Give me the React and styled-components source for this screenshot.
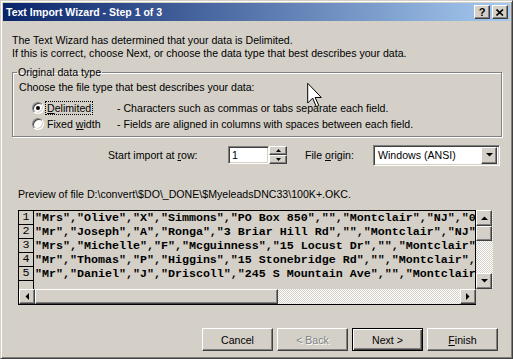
import React from 'react';
import styled, { createGlobalStyle, css } from 'styled-components';

const GlobalStyle = createGlobalStyle`
  html, body {
    margin: 0;
    padding: 0;
    background: #D4D0C8;
  }
  body {
    font-family: "Liberation Sans", Arial, sans-serif;
    font-size: 10.6px;
    color: #000;
  }
  * { box-sizing: border-box; }
`

const raised = css`
  background: #D4D0C8;
  border: 1px solid;
  border-color: #fff #404040 #404040 #fff;
  box-shadow: inset -1px -1px 0 #808080, inset 1px 1px 0 #D4D0C8;
`

const sunken = css`
  border: 1px solid;
  border-color: #808080 #fff #fff #808080;
  box-shadow: inset 1px 1px 0 #404040, inset -1px -1px 0 #D4D0C8;
`

const dither = css`
  background: repeating-conic-gradient(#fff 0 25%, #D4D0C8 0 50%) 0 0 / 2px 2px;
`

const Window = styled.div`
  position: relative;
  width: 513px;
  height: 359px;
  border: 1px solid;
  border-color: #D4D0C8 #404040 #404040 #D4D0C8;
  box-shadow: inset 1px 1px 0 #fff, inset -1px -1px 0 #808080;
  padding: 2px;
  display: flex;
  flex-direction: column;
  overflow: hidden;
`

const TitleBar = styled.div`
  height: 18px;
  display: flex;
  align-items: center;
  padding: 0 2px 0 3px;
  background: linear-gradient(to right, #0A246A, #A6CAF0);
  color: #fff;
  font-weight: bold;
  font-size: 10.5px;
`

const TitleText = styled.div`
  flex: 1;
`

const TitleButton = styled.div`
  ${raised};
  width: 16px;
  height: 14px;
  margin-left: ${p => p.$gap || 0}px;
  display: flex;
  align-items: center;
  justify-content: center;
  color: #000;
  font-size: 11px;
  font-weight: bold;
  line-height: 1;
`

const Body = styled.div`
  padding: 13px 8px 0 9px;
  display: flex;
  flex-direction: column;
`

const Line = styled.div`
  line-height: 13px;
  white-space: nowrap;
`

const U = styled.span`
  text-decoration: underline;
`

const Group = styled.fieldset`
  margin: 6px 0 0;
  padding: 0 0 4px 6px;
  min-width: 0;
  border: 1px solid #808080;
  box-shadow: inset 1px 1px 0 #fff, 1px 1px 0 #fff;
`

const Legend = styled.legend`
  padding: 0 1px;
  margin-left: -2px;
  line-height: 13px;
`

const Prompt = styled.div`
  line-height: 13px;
  margin: 2px 0 6px;
`

const OptionRow = styled.div`
  display: flex;
  align-items: center;
  height: 16px;
  padding-left: 13px;
`

const Radio = styled.span`
  position: relative;
  width: 12px;
  height: 12px;
  border-radius: 50%;
  background: #fff;
  border: 1px solid;
  border-color: #808080 #fff #fff #808080;
  box-shadow: inset 1px 1px 0 #404040, inset -1px -1px 0 #D4D0C8;
  flex: none;
  &::after {
    content: '';
    display: ${p => (p.$checked ? 'block' : 'none')};
    position: absolute;
    left: 3px;
    top: 3px;
    width: 4px;
    height: 4px;
    border-radius: 50%;
    background: #000;
  }
`

const OptionLabel = styled.span`
  width: 72px;
  margin-left: 1px;
  flex: none;
  display: flex;
`

const LabelText = styled.span`
  padding: 0 1px;
  line-height: 12px;
  border: 1px dotted ${p => (p.$focus ? '#000' : 'transparent')};
`

const OptionHint = styled.span`
  white-space: nowrap;
`

const SettingsRow = styled.div`
  display: flex;
  align-items: center;
  height: 22px;
  margin-top: 7px;
  padding-left: 96px;
`

const FieldLabel = styled.span`
  width: ${p => p.$w}px;
  margin-left: ${p => p.$ml || 0}px;
  flex: none;
`

const Spinner = styled.div`
  display: flex;
  width: 59px;
  height: 18px;
`

const SpinInput = styled.div`
  ${sunken};
  background: #fff;
  flex: 1;
  padding: 2px 3px;
  line-height: 12px;
`

const SpinButtons = styled.div`
  width: 18px;
  display: flex;
  flex-direction: column;
`

const SpinButton = styled.div`
  ${raised};
  flex: 1;
  display: flex;
  align-items: center;
  justify-content: center;
`

const Combo = styled.div`
  ${sunken};
  background: #fff;
  width: 127px;
  height: 21px;
  display: flex;
  align-items: center;
  padding: 2px 2px 2px 4px;
`

const ComboText = styled.span`
  flex: 1;
`

const ComboButton = styled.div`
  ${raised};
  width: 16px;
  height: 17px;
  display: flex;
  align-items: center;
  justify-content: center;
`

const PreviewLabel = styled.div`
  line-height: 13px;
  margin: 22px 0 0 6px;
`

const Preview = styled.div`
  margin: 9px 0 0 6px;
  width: 475px;
  display: flex;
  flex-direction: column;
`

const PreviewTop = styled.div`
  display: flex;
  height: 79px;
`

const DataPane = styled.div`
  flex: 1;
  border: 1px solid #000;
  border-bottom: none;
  display: flex;
  overflow: hidden;
`

const NumberColumn = styled.div`
  width: 15px;
  border-right: 1px solid #000;
  flex: none;
`

const NumberCell = styled.div`
  height: 14px;
  border-bottom: 1px solid #000;
  font-family: "Liberation Mono", "Courier New", monospace;
  font-size: 11.67px;
  line-height: 13px;
  text-align: center;
`

const Rows = styled.div`
  flex: 1;
  overflow: hidden;
`

const DataRow = styled.div`
  height: 14px;
  padding-left: 1px;
  font-family: "Liberation Mono", "Courier New", monospace;
  font-size: 11.67px;
  font-weight: bold;
  line-height: 14px;
  white-space: pre;
`

const VScroll = styled.div`
  width: 17px;
  ${dither};
  display: flex;
  flex-direction: column;
`

const ScrollButton = styled.div`
  ${raised};
  width: ${p => p.$w || 16}px;
  height: ${p => p.$h || 16}px;
  flex: none;
  display: flex;
  align-items: center;
  justify-content: center;
`

const Track = styled.div`
  flex: 1;
`

const PreviewBottom = styled.div`
  display: flex;
  height: 16px;
`

const HScroll = styled.div`
  flex: 1;
  ${dither};
  display: flex;
  border-left: 1px solid #000;
  border-bottom: 1px solid #000;
`

const HThumb = styled.div`
  ${raised};
  width: 243px;
`

const Corner = styled.div`
  width: 17px;
`

const Buttons = styled.div`
  display: flex;
  justify-content: flex-end;
  gap: 4px;
  margin-top: 23px;
  padding-right: 4px;
`

const Button = styled.div`
  ${raised};
  width: 71px;
  height: 23px;
  display: flex;
  align-items: center;
  justify-content: center;
  color: ${p => (p.$disabled ? '#808080' : '#000')};
  text-shadow: ${p => (p.$disabled ? '1px 1px 0 #fff' : 'none')};
  ${p => p.$default && css`
    border-color: #000;
    box-shadow: inset 1px 1px 0 #fff, inset -1px -1px 0 #404040, inset -2px -2px 0 #808080;
  `}
`

const Cursor = styled.svg`
  position: absolute;
  left: 304px;
  top: 81px;
`

const Arrow = ({ dir }) => {
  const pts = {
    up: '0,4 7,4 3.5,0.5',
    down: '0,0 7,0 3.5,3.5',
    left: '4,0 4,7 0.5,3.5',
    right: '0,0 0,7 3.5,3.5',
  }[dir]
  const horiz = dir === 'left' || dir === 'right'
  return (
    <svg width={horiz ? 4 : 7} height={horiz ? 7 : 4} viewBox={horiz ? '0 0 4 7' : '0 0 7 4'}>
      <polygon points={pts} fill="#000" />
    </svg>
  )
}

const SmallArrow = ({ dir }) => (
  <svg width="5" height="3" viewBox="0 0 5 3">
    <polygon points={dir === 'up' ? '0,3 5,3 2.5,0' : '0,0 5,0 2.5,3'} fill="#000" />
  </svg>
)

const rows = [
  '"Mrs","Olive","X","Simmons","PO Box 850","","Montclair","NJ","07042"',
  '"Mr","Joseph","A","Ronga","3 Briar Hill Rd","","Montclair","NJ","07042"',
  '"Mrs","Michelle","F","Mcguinness","15 Locust Dr","","Montclair","NJ"',
  '"Mr","Thomas","P","Higgins","15 Stonebridge Rd","","Montclair","NJ"',
  '"Mr","Daniel","J","Driscoll","245 S Mountain Ave","","Montclair","NJ"',
]

export default function App() {
  return (
    <>
      <GlobalStyle />
      <Window>
        <TitleBar>
          <TitleText>Text Import Wizard - Step 1 of 3</TitleText>
          <TitleButton>?</TitleButton>
          <TitleButton $gap={2}>
            <svg width="8" height="7" viewBox="0 0 8 7">
              <path d="M0.5 0.5 L7 6.5 M7 0.5 L0.5 6.5" stroke="#000" strokeWidth="1.6" />
            </svg>
          </TitleButton>
        </TitleBar>

        <Body>
          <Line>The Text Wizard has determined that your data is Delimited.</Line>
          <Line>If this is correct, choose Next, or choose the data type that best describes your data.</Line>

          <Group>
            <Legend>Original data type</Legend>
            <Prompt>Choose the file type that best describes your data:</Prompt>
            <OptionRow>
              <Radio $checked />
              <OptionLabel>
                <LabelText $focus><U>D</U>elimited</LabelText>
              </OptionLabel>
              <OptionHint>- Characters such as commas or tabs separate each field.</OptionHint>
            </OptionRow>
            <OptionRow>
              <Radio />
              <OptionLabel>
                <LabelText>Fixed <U>w</U>idth</LabelText>
              </OptionLabel>
              <OptionHint>- Fields are aligned in columns with spaces between each field.</OptionHint>
            </OptionRow>
          </Group>

          <SettingsRow>
            <FieldLabel $w={120}>Start import at <U>r</U>ow:</FieldLabel>
            <Spinner>
              <SpinInput>1</SpinInput>
              <SpinButtons>
                <SpinButton><SmallArrow dir="up" /></SpinButton>
                <SpinButton><SmallArrow dir="down" /></SpinButton>
              </SpinButtons>
            </Spinner>
            <FieldLabel $w={68} $ml={18}>File <U>o</U>rigin:</FieldLabel>
            <Combo>
              <ComboText>Windows (ANSI)</ComboText>
              <ComboButton><Arrow dir="down" /></ComboButton>
            </Combo>
          </SettingsRow>

          <PreviewLabel>Preview of file D:\convert\$DO\_DONE\$MyeleadsDNC33\100K+.OKC.</PreviewLabel>

          <Preview>
            <PreviewTop>
              <DataPane>
                <NumberColumn>
                  {rows.map((_, i) => (
                    <NumberCell key={i}>{i + 1}</NumberCell>
                  ))}
                </NumberColumn>
                <Rows>
                  {rows.map((r, i) => (
                    <DataRow key={i}>{r}</DataRow>
                  ))}
                </Rows>
              </DataPane>
              <VScroll>
                <ScrollButton><Arrow dir="up" /></ScrollButton>
                <ScrollButton $h={15} />
                <Track />
                <ScrollButton><Arrow dir="down" /></ScrollButton>
              </VScroll>
            </PreviewTop>
            <PreviewBottom>
              <HScroll>
                <ScrollButton $h={15}><Arrow dir="left" /></ScrollButton>
                <HThumb />
                <Track />
                <ScrollButton $h={15}><Arrow dir="right" /></ScrollButton>
              </HScroll>
              <Corner />
            </PreviewBottom>
          </Preview>

          <Buttons>
            <Button>Cancel</Button>
            <Button $disabled>&lt; Back</Button>
            <Button $default>Next &gt;</Button>
            <Button><span><U>F</U>inish</span></Button>
          </Buttons>
        </Body>

        <Cursor width="19" height="26" viewBox="0 0 13 21">
          <path d="M1 1 L1 17 L5 13 L8 20 L10 19 L7 12.5 L12 12.5 Z" fill="#fff" stroke="#000" strokeWidth="0.8" strokeLinejoin="miter" />
        </Cursor>
      </Window>
    </>
  )
}
